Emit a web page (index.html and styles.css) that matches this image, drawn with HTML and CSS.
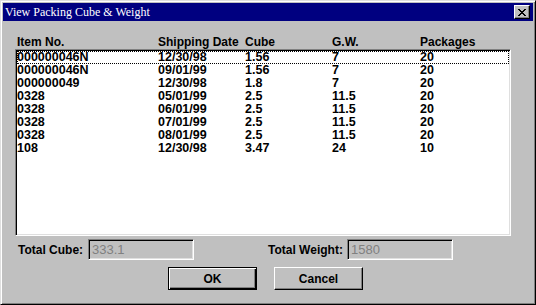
FILE: index.html
```html
<!DOCTYPE html>
<html lang="en">
<head>
    <meta charset="UTF-8">
    <title>View Packing Cube &amp; Weight</title>
    <link rel="stylesheet" href="styles.css">
</head>
<body>
    <div class="dialog">
        <!-- Title bar -->
        <div class="titlebar">
            <span class="title">View Packing Cube &amp; Weight</span>
            <span class="close">
                <svg width="8" height="7" viewBox="0 0 8 7">
                    <path d="M0 0h2v1h1v1h2v-1h1v-1h2v1h-1v1h-1v1h-1v1h1v1h1v1h1v1h-2v-1h-1v-1h-2v1h-1v1h-2v-1h1v-1h1v-1h1v-1h-1v-1h-1v-1h-1z" fill="#000"/>
                </svg>
            </span>
        </div>

        <div class="content">
            <!-- Column headers -->
            <div class="cols head">
                <span>Item No.</span>
                <span>Shipping Date</span>
                <span>Cube</span>
                <span>G.W.</span>
                <span>Packages</span>
            </div>

            <!-- List -->
            <div class="listbox">
                <div class="cols row focus"><span>000000046N</span><span>12/30/98</span><span>1.56</span><span>7</span><span>20</span></div>
                <div class="cols row"><span>000000046N</span><span>09/01/99</span><span>1.56</span><span>7</span><span>20</span></div>
                <div class="cols row"><span>000000049</span><span>12/30/98</span><span>1.8</span><span>7</span><span>20</span></div>
                <div class="cols row"><span>0328</span><span>05/01/99</span><span>2.5</span><span>11.5</span><span>20</span></div>
                <div class="cols row"><span>0328</span><span>06/01/99</span><span>2.5</span><span>11.5</span><span>20</span></div>
                <div class="cols row"><span>0328</span><span>07/01/99</span><span>2.5</span><span>11.5</span><span>20</span></div>
                <div class="cols row"><span>0328</span><span>08/01/99</span><span>2.5</span><span>11.5</span><span>20</span></div>
                <div class="cols row"><span>108</span><span>12/30/98</span><span>3.47</span><span>24</span><span>10</span></div>
            </div>

            <!-- Totals -->
            <div class="totals">
                <label class="lbl lbl-cube">Total Cube:</label>
                <div class="field">333.1</div>
                <label class="lbl lbl-weight">Total Weight:</label>
                <div class="field">1580</div>
            </div>

            <!-- Buttons -->
            <div class="buttons">
                <button class="btn default">OK</button>
                <button class="btn">Cancel</button>
            </div>
        </div>
    </div>
</body>
</html>
```

FILE: styles.css
```css
body {
    margin: 0;
    padding: 0;
    background-color: #c0c0c0;
    font-family: "Liberation Sans", Arial, sans-serif;
}
.dialog {
    width: 536px;
    height: 305px;
    box-sizing: border-box;
    background-color: #c0c0c0;
    border-top: 1px solid #dfdfdf;
    border-left: 1px solid #dfdfdf;
    border-right: 1px solid #000;
    border-bottom: 1px solid #000;
    box-shadow: inset 1px 1px 0 #fff, inset -1px -1px 0 #808080;
    padding: 2px;
}
.titlebar {
    height: 18px;
    background-color: #000080;
    display: flex;
    align-items: center;
    justify-content: space-between;
    padding: 0 3px 0 2px;
}
.title {
    color: #fff;
    font-family: "Liberation Serif", "Times New Roman", serif;
    font-size: 12px;
    white-space: nowrap;
}
.close {
    width: 16px;
    height: 14px;
    box-sizing: border-box;
    background-color: #c0c0c0;
    border-top: 1px solid #fff;
    border-left: 1px solid #fff;
    border-right: 1px solid #000;
    border-bottom: 1px solid #000;
    box-shadow: inset -1px -1px 0 #808080;
    display: flex;
    align-items: center;
    justify-content: center;
}
.content {
    padding-left: 12px;
}
.cols {
    display: grid;
    grid-template-columns: 141px 87px 87px 88px 1fr;
    font-size: 12.5px;
    font-weight: bold;
    line-height: 13px;
    height: 13px;
    color: #000;
    white-space: nowrap;
}
.head {
    margin-top: 15px;
    padding-left: 2px;
    font-size: 12px;
}
.listbox {
    width: 496px;
    height: 187px;
    box-sizing: border-box;
    background-color: #fff;
    border-top: 1px solid #808080;
    border-left: 1px solid #808080;
    border-right: 1px solid #fff;
    border-bottom: 1px solid #fff;
    box-shadow: inset 1px 1px 0 #000, inset -1px -1px 0 #dfdfdf;
    padding: 1px;
}
.row {
    box-sizing: border-box;
}
.focus {
    outline: 1px dotted #000;
    outline-offset: -1px;
}
.totals {
    display: flex;
    align-items: center;
    margin-top: 3px;
    height: 21px;
}
.lbl {
    font-size: 12px;
    font-weight: bold;
    white-space: nowrap;
}
.lbl-cube {
    margin-left: 3px;
    width: 70px;
}
.lbl-weight {
    margin-left: 74px;
    width: 79px;
}
.field {
    width: 106px;
    height: 21px;
    box-sizing: border-box;
    border-top: 1px solid #808080;
    border-left: 1px solid #808080;
    border-right: 1px solid #fff;
    border-bottom: 1px solid #fff;
    box-shadow: inset 1px 1px 0 #000, inset -1px -1px 0 #dfdfdf;
    padding: 2px 3px;
    font-size: 13px;
    line-height: 15px;
    color: #808080;
}
.buttons {
    display: flex;
    gap: 17px;
    margin-top: 7px;
    padding-left: 153px;
}
.btn {
    width: 89px;
    height: 23px;
    box-sizing: border-box;
    background-color: #c0c0c0;
    border-top: 1px solid #fff;
    border-left: 1px solid #fff;
    border-right: 1px solid #000;
    border-bottom: 1px solid #000;
    box-shadow: inset -1px -1px 0 #808080;
    font-family: "Liberation Sans", Arial, sans-serif;
    font-size: 12px;
    font-weight: bold;
    padding: 0;
    color: #000;
}
.default {
    border: 1px solid #000;
    box-shadow: inset 1px 1px 0 #fff, inset -1px -1px 0 #000, inset -2px -2px 0 #808080;
}
```
